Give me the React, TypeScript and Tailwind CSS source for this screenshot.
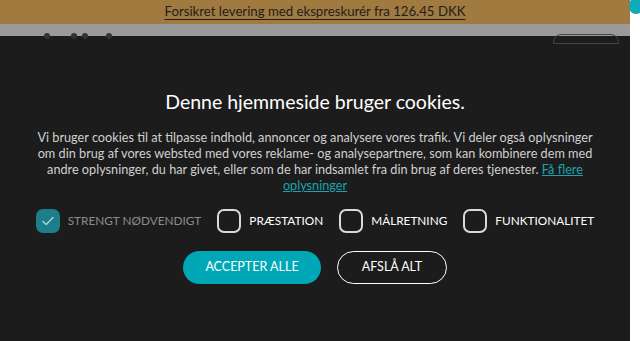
import React from "react";

const Check = ({ checked }: { checked?: boolean }) => (
  <span
    className={`flex h-[24px] w-[24px] shrink-0 items-center justify-center rounded-[7px] ${
      checked ? "bg-[#1d7d88]" : "border-2 border-[#d9d9d9]"
    }`}
  >
    {checked && (
      <svg width="14" height="14" viewBox="0 0 14 14" fill="none">
        <path d="M2 7.5l3.2 3L12 3.5" stroke="#9fd3d9" strokeWidth="1.6" strokeLinecap="round" strokeLinejoin="round" />
      </svg>
    )}
  </span>
);

const Option = ({ label, checked, disabled }: { label: string; checked?: boolean; disabled?: boolean }) => (
  <label className="flex items-center gap-[8px]">
    <Check checked={checked} />
    <span className={`text-[11.8px] ${disabled ? "text-[#8c8c8c]" : "text-white"}`}>{label}</span>
  </label>
);

export default function App() {
  return (
    <div className="relative h-[341px] w-[640px] overflow-hidden bg-white font-['Lato',sans-serif]">
      <div className="w-[630px]">
        {/* promo bar */}
        <div className="flex h-[24px] items-center justify-center bg-[#a07a3e]">
          <span className="text-[13.2px] text-[#1e1e1e] underline underline-offset-[3px]">
            Forsikret levering med ekspreskurér fra 126.45 DKK
          </span>
        </div>
        {/* dimmed header */}
        <div className="relative h-[12px] bg-[#9a9a9a]">
          <span className="absolute left-[44px] top-[9px] h-[6px] w-[6px] rounded-full bg-[#333]" />
          <span className="absolute left-[71px] top-[9px] h-[6px] w-[6px] rounded-full bg-[#333]" />
          <span className="absolute left-[82px] top-[9px] h-[6px] w-[6px] rounded-full bg-[#333]" />
          <span className="absolute left-[106px] top-[9px] h-[6px] w-[6px] rounded-full bg-[#333]" />
          <span className="absolute left-[553px] top-[10px] h-[10px] w-[66px] rounded-t-[8px] border border-[#444]" />
        </div>
        {/* cookie banner */}
        <div className="flex h-[305px] flex-col items-center bg-[#1c1c1c] pt-[55px]">
          <h1 className="text-[19.5px] font-normal leading-[22px] text-white">Denne hjemmeside bruger cookies.</h1>
          <p className="mt-[16px] w-[575px] text-center text-[12.7px] leading-[16px] text-[#d0d0d0]">
            Vi bruger cookies til at tilpasse indhold, annoncer og analysere vores trafik. Vi deler også oplysninger om din
            brug af vores websted med vores reklame- og analysepartnere, som kan kombinere dem med andre oplysninger, du har
            givet, eller som de har indsamlet fra din brug af deres tjenester.{" "}
            <a className="text-[#1aa3b0] underline">Få flere oplysninger</a>
          </p>
          <div className="mt-[16px] flex items-center gap-[16px]">
            <Option label="STRENGT NØDVENDIGT" checked disabled />
            <Option label="PRÆSTATION" />
            <Option label="MÅLRETNING" />
            <Option label="FUNKTIONALITET" />
          </div>
          <div className="mt-[18px] flex items-center gap-[16px]">
            <button className="h-[33px] w-[138px] rounded-full bg-[#00a8b7] text-[12.5px] text-white">ACCEPTER ALLE</button>
            <button className="h-[33px] w-[110px] rounded-full border border-white text-[12.5px] text-white">AFSLÅ ALT</button>
          </div>
        </div>
      </div>
      <span className="absolute left-[629px] top-[-2px] h-[16px] w-[14px] rounded-full bg-[#12a9b8]" />
    </div>
  );
}
